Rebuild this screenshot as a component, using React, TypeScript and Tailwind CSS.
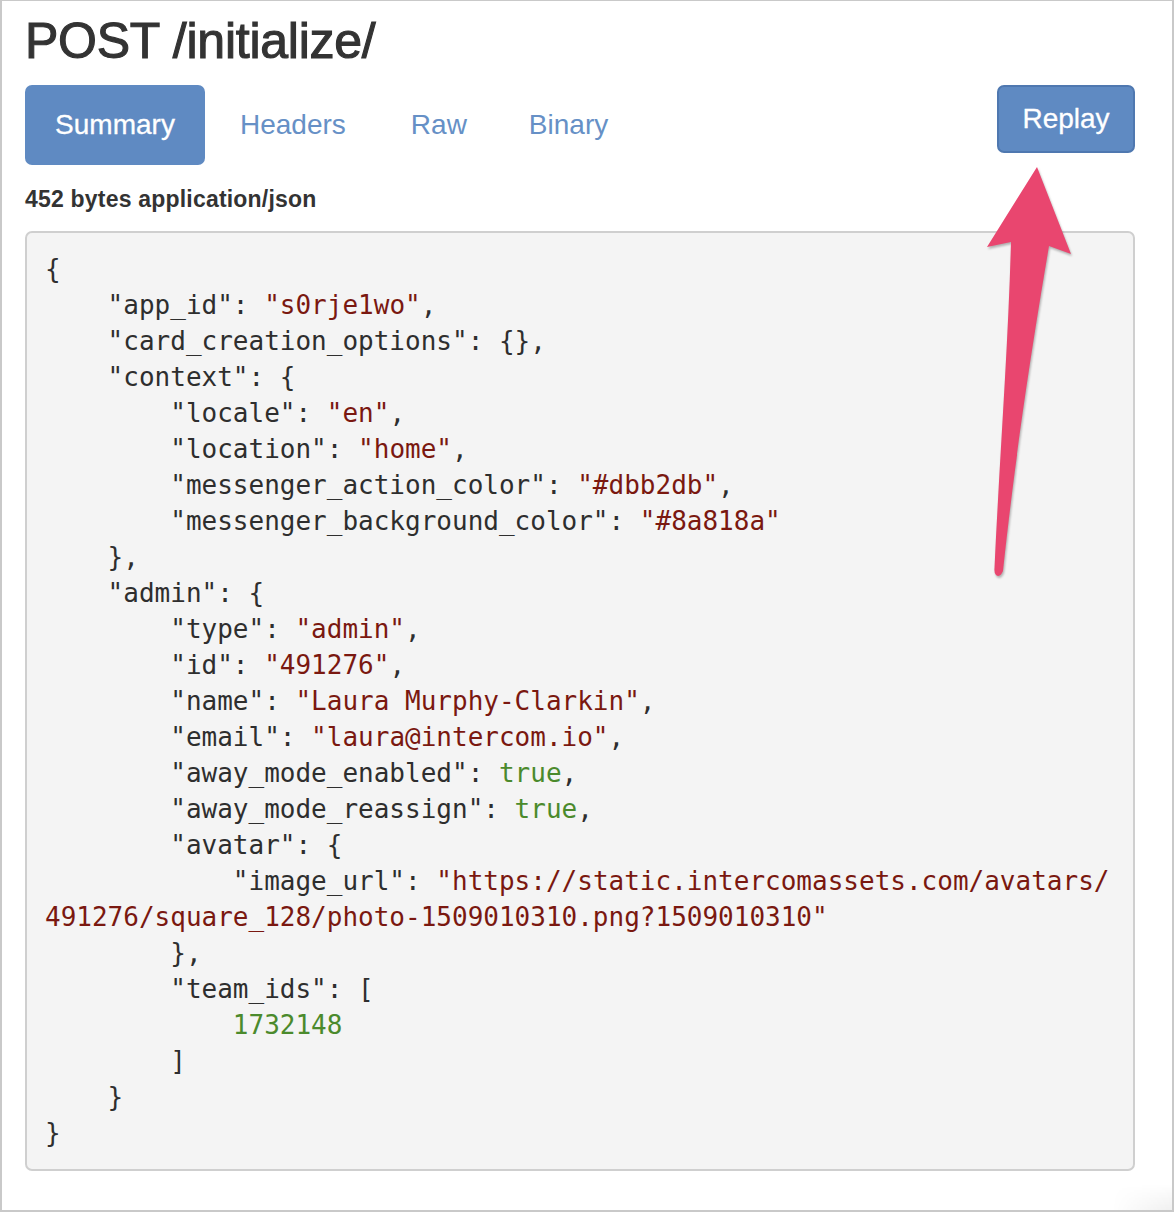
import React from "react";

type Seg = { t: string; c?: "s" | "g" };

const L = (...segs: (string | Seg)[]): Seg[] =>
  segs.map((s) => (typeof s === "string" ? { t: s } : s));
const S = (t: string): Seg => ({ t, c: "s" });
const G = (t: string): Seg => ({ t, c: "g" });

const lines: Seg[][] = [
  L("{"),
  L('    "app_id": ', S('"s0rje1wo"'), ","),
  L('    "card_creation_options": {},'),
  L('    "context": {'),
  L('        "locale": ', S('"en"'), ","),
  L('        "location": ', S('"home"'), ","),
  L('        "messenger_action_color": ', S('"#dbb2db"'), ","),
  L('        "messenger_background_color": ', S('"#8a818a"')),
  L("    },"),
  L('    "admin": {'),
  L('        "type": ', S('"admin"'), ","),
  L('        "id": ', S('"491276"'), ","),
  L('        "name": ', S('"Laura Murphy-Clarkin"'), ","),
  L('        "email": ', S('"laura@intercom.io"'), ","),
  L('        "away_mode_enabled": ', G("true"), ","),
  L('        "away_mode_reassign": ', G("true"), ","),
  L('        "avatar": {'),
  L('            "image_url": ', S('"https://static.intercomassets.com/avatars/')),
  L(S('491276/square_128/photo-1509010310.png?1509010310"')),
  L("        },"),
  L('        "team_ids": ['),
  L("            ", G("1732148")),
  L("        ]"),
  L("    }"),
  L("}"),
];

export default function App() {
  return (
    <div className="relative w-[1174px] h-[1212px] bg-white border-l-2 border-t border-r-2 border-b-2 border-[#c9c9c9] pl-[23px] font-['Liberation_Sans',Arial,sans-serif] text-[#333] overflow-hidden">
      <h1 className="pt-[16px] text-[50px] leading-[49px] [-webkit-text-stroke:1.1px_#333] tracking-[-0.25px]">
        POST /initialize/
      </h1>
      <div className="mt-[19px] flex w-[1110px] items-start">
        <div className="flex items-center gap-[2px]">
          <div className="flex h-[80px] w-[180px] items-center justify-center rounded-[7px] bg-[#5f8ac2] text-[28px] text-white [-webkit-text-stroke:0.3px_#fff]">
            Summary
          </div>
          <div className="flex h-[80px] items-center px-[33px] text-[28px] text-[#6690c6]">Headers</div>
          <div className="flex h-[80px] items-center px-[30px] text-[28px] text-[#6690c6]">Raw</div>
          <div className="flex h-[80px] items-center px-[30px] text-[28px] text-[#6690c6]">Binary</div>
        </div>
        <div className="ml-auto flex h-[68px] w-[138px] items-center justify-center rounded-[7px] border-2 border-[#4f78b0] bg-[#5f8ac2] text-[28px] text-white [-webkit-text-stroke:0.3px_#fff]">
          Replay
        </div>
      </div>
      <div className="mt-[23px] text-[23px] font-bold leading-none tracking-[0.2px]">452 bytes application/json</div>
      <div className="mt-[20px] w-[1110px] rounded-[7px] border-2 border-[#cfcfcf] bg-[#f4f4f4] p-[18px] font-['DejaVu_Sans_Mono',Menlo,monospace] text-[26px] leading-[36px] text-[#2e2e2e]">
        {lines.map((segs, i) => (
          <div key={i} className="h-[36px] whitespace-pre">
            {segs.map((s, j) =>
              s.c === "s" ? (
                <span key={j} className="text-[#7a1810]">
                  {s.t}
                </span>
              ) : s.c === "g" ? (
                <span key={j} className="text-[#4b8a2c]">
                  {s.t}
                </span>
              ) : (
                <span key={j}>{s.t}</span>
              )
            )}
          </div>
        ))}
      </div>
      <div className="pointer-events-none absolute right-0 bottom-0 h-[26px] w-[60px] bg-linear-to-b from-transparent to-black/[0.06] [mask-image:linear-gradient(to_right,transparent,black)]" />
      <svg
        className="pointer-events-none absolute left-[-2px] top-[-1px] [filter:drop-shadow(1px_2px_1px_rgba(0,0,0,0.28))]"
        width="1174"
        height="1212"
        viewBox="0 0 1174 1212"
      >
        <path
          d="M1037 167 L1071 254 L1049 246 C1040 300 1018 430 1003 571 Q1000 578 996 575 Q994 573 994.5 568 C1000 450 1008 350 1011 242 L987 247 Z"
          fill="#e9466f"
        />
      </svg>
    </div>
  );
}
